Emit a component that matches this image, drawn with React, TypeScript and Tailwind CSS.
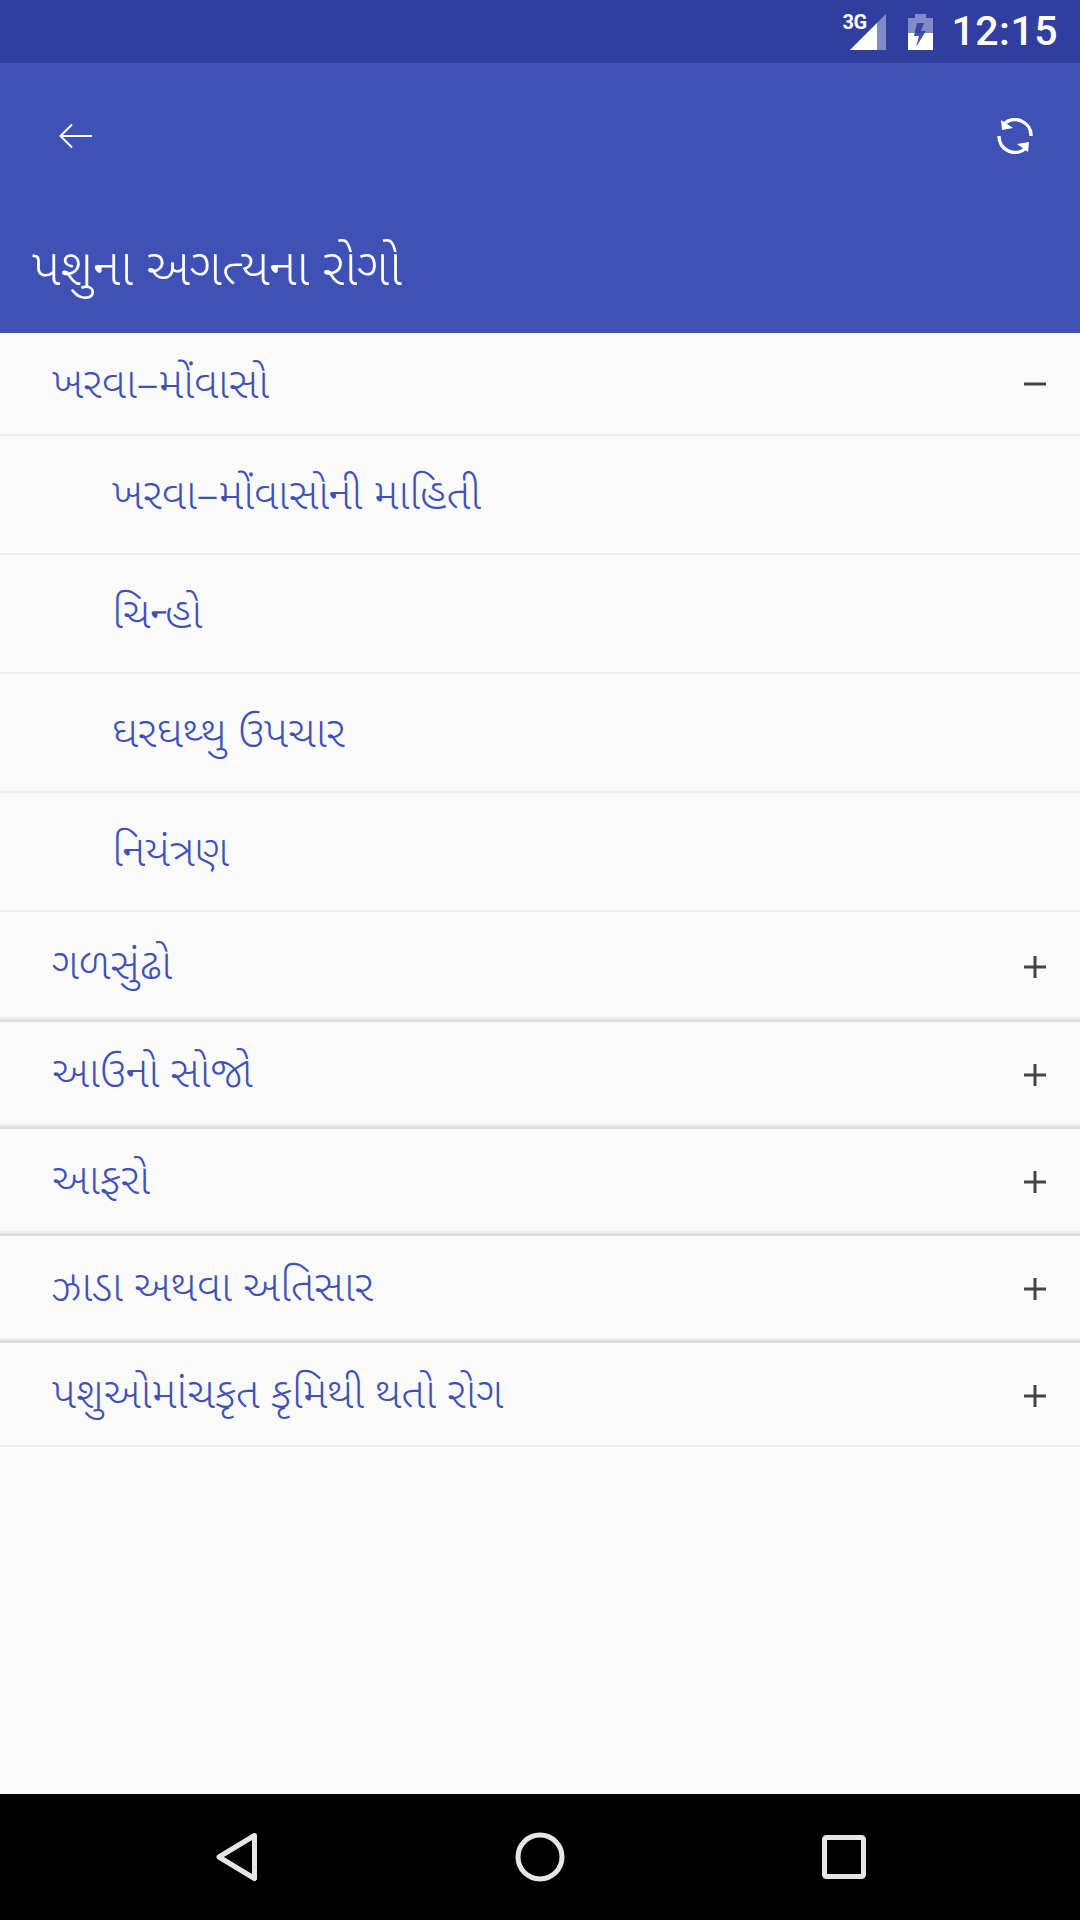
import React from "react";

const font = "font-['Noto_Sans_Gujarati','Lohit_Gujarati','Noto_Sans','Roboto',sans-serif]";
const item = `pt-[8px] text-[43px] leading-[60px] font-light text-[#3f51b5] ${font}`;

function Plus() {
  return (
    <svg width="24" height="24" viewBox="0 0 24 24" className="mt-[4px] text-[#444444]">
      <path d="M1 12H23M12 1V23" stroke="currentColor" strokeWidth="3" fill="none" />
    </svg>
  );
}
function Minus() {
  return (
    <svg width="24" height="24" viewBox="0 0 24 24" className="text-[#444444]">
      <path d="M1 12H23" stroke="currentColor" strokeWidth="3" fill="none" />
    </svg>
  );
}

function Group({ label, big }: { label: string; big?: boolean }) {
  return (
    <div className={`${big ? "h-[110px]" : "h-[107px]"} flex flex-col`}>
      <div className="flex-1 flex items-center justify-between pl-[52px] pr-[33px]">
        <span className={item}>{label}</span>
        <Plus />
      </div>
      <div className="h-[2px] bg-[#eeeeee]" />
      <div className="h-[3px] bg-[#dedede]" />
    </div>
  );
}

function Sub({ label }: { label: string }) {
  return (
    <div className="h-[119px] flex flex-col">
      <div className="flex-1 flex items-center pl-[112px]">
        <span className={item}>{label}</span>
      </div>
      <div className="h-[2px] bg-[#eeeeee]" />
    </div>
  );
}

export default function App() {
  return (
    <div className="w-[1080px] h-[1920px] flex flex-col bg-[#fafafa] overflow-hidden">
      <div className="h-[63px] bg-[#303f9f] flex items-center justify-end pr-[22px] shrink-0">
        <div className="relative w-[36px] h-[36px]">
          <svg width="36" height="36" viewBox="0 0 36 36" className="absolute left-0 top-0">
            <path d="M0 36L36 0V36Z" fill="#ffffff" fillOpacity="0.4" />
            <path d="M0 36L27 9V36Z" fill="#ffffff" />
          </svg>
          <span className="absolute left-[-8px] top-[-2px] text-[20px] leading-[20px] tracking-[-0.5px] font-bold text-white font-['Roboto',sans-serif]">3G</span>
        </div>
        <svg width="25" height="36" viewBox="0 0 25 36" className="ml-[22px]">
          <path d="M0 4H7V0H18V4H25V36H0Z" fill="#ffffff" fillOpacity="0.4" />
          <path d="M0 19H25V36H0Z" fill="#ffffff" />
          <path d="M16 9H9L6 22H11L8 33L18 17H13Z" fill="#303f9f" fillOpacity="0.9" />
        </svg>
        <span className="ml-[18px] text-[41px] leading-none font-medium text-white font-['Roboto',sans-serif] tracking-[0.5px]">12:15</span>
      </div>

      <div className="h-[270px] bg-[#3f51b5] flex flex-col shrink-0">
        <div className="h-[145px] flex items-center justify-between pl-[59px] pr-[47px]">
          <svg width="34" height="26" viewBox="0 0 34 26">
            <path d="M33 13H2M13 1.5L1.5 13L13 24.5" stroke="#ffffff" strokeWidth="2" fill="none" />
          </svg>
          <svg width="36" height="36" viewBox="0 0 36 36">
            <path d="M7 6A16 16 0 0 1 34 18" stroke="#ffffff" strokeWidth="3.5" fill="none" />
            <path d="M4 2L5 12L16 10Z" fill="#ffffff" />
            <path d="M2 18A16 16 0 0 0 29 30" stroke="#ffffff" strokeWidth="3.5" fill="none" />
            <path d="M32 24L31 34L20 26Z" fill="#ffffff" />
          </svg>
        </div>
        <div className="pl-[32px] mt-[30px]">
          <span className={`text-[51px] leading-[70px] font-light text-white ${font}`}>પશુના અગત્યના રોગો</span>
        </div>
      </div>

      <div className="flex-1 flex flex-col">
        <div className="h-[103px] flex flex-col">
          <div className="flex-1 flex items-center justify-between pl-[52px] pr-[33px]">
            <span className={item}>ખરવા–મોંવાસો</span>
            <Minus />
          </div>
          <div className="h-[2px] bg-[#eeeeee]" />
        </div>
        <Sub label="ખરવા–મોંવાસોની માહિતી" />
        <Sub label="ચિન્હો" />
        <Sub label="ઘરઘથ્થુ ઉપચાર" />
        <Sub label="નિયંત્રણ" />
        <Group label="ગળસુંઢો" big />
        <Group label="આઉનો સોજો" />
        <Group label="આફરો" />
        <Group label="ઝાડા અથવા અતિસાર" />
        <div className="h-[104px] flex flex-col">
          <div className="flex-1 flex items-center justify-between pl-[52px] pr-[33px]">
            <span className={item}>પશુઓમાંચકૃત કૃમિથી થતો રોગ</span>
            <Plus />
          </div>
          <div className="h-[2px] bg-[#eeeeee]" />
        </div>
      </div>

      <div className="h-[126px] bg-black shrink-0 flex items-center justify-center">
        <div className="w-[650px] ml-[2px] flex items-center justify-between">
          <svg width="42" height="50" viewBox="0 0 42 50">
            <path d="M38.5 3.5L3 25L38.5 46.5Z" stroke="#e6e6e6" strokeWidth="5" strokeLinejoin="round" fill="none" />
          </svg>
          <svg width="50" height="50" viewBox="0 0 50 50">
            <circle cx="25" cy="25" r="22" stroke="#e6e6e6" strokeWidth="5" fill="none" />
          </svg>
          <svg width="44" height="44" viewBox="0 0 44 44">
            <rect x="2.5" y="2.5" width="39" height="39" rx="2" stroke="#e6e6e6" strokeWidth="5" fill="none" />
          </svg>
        </div>
      </div>
    </div>
  );
}
